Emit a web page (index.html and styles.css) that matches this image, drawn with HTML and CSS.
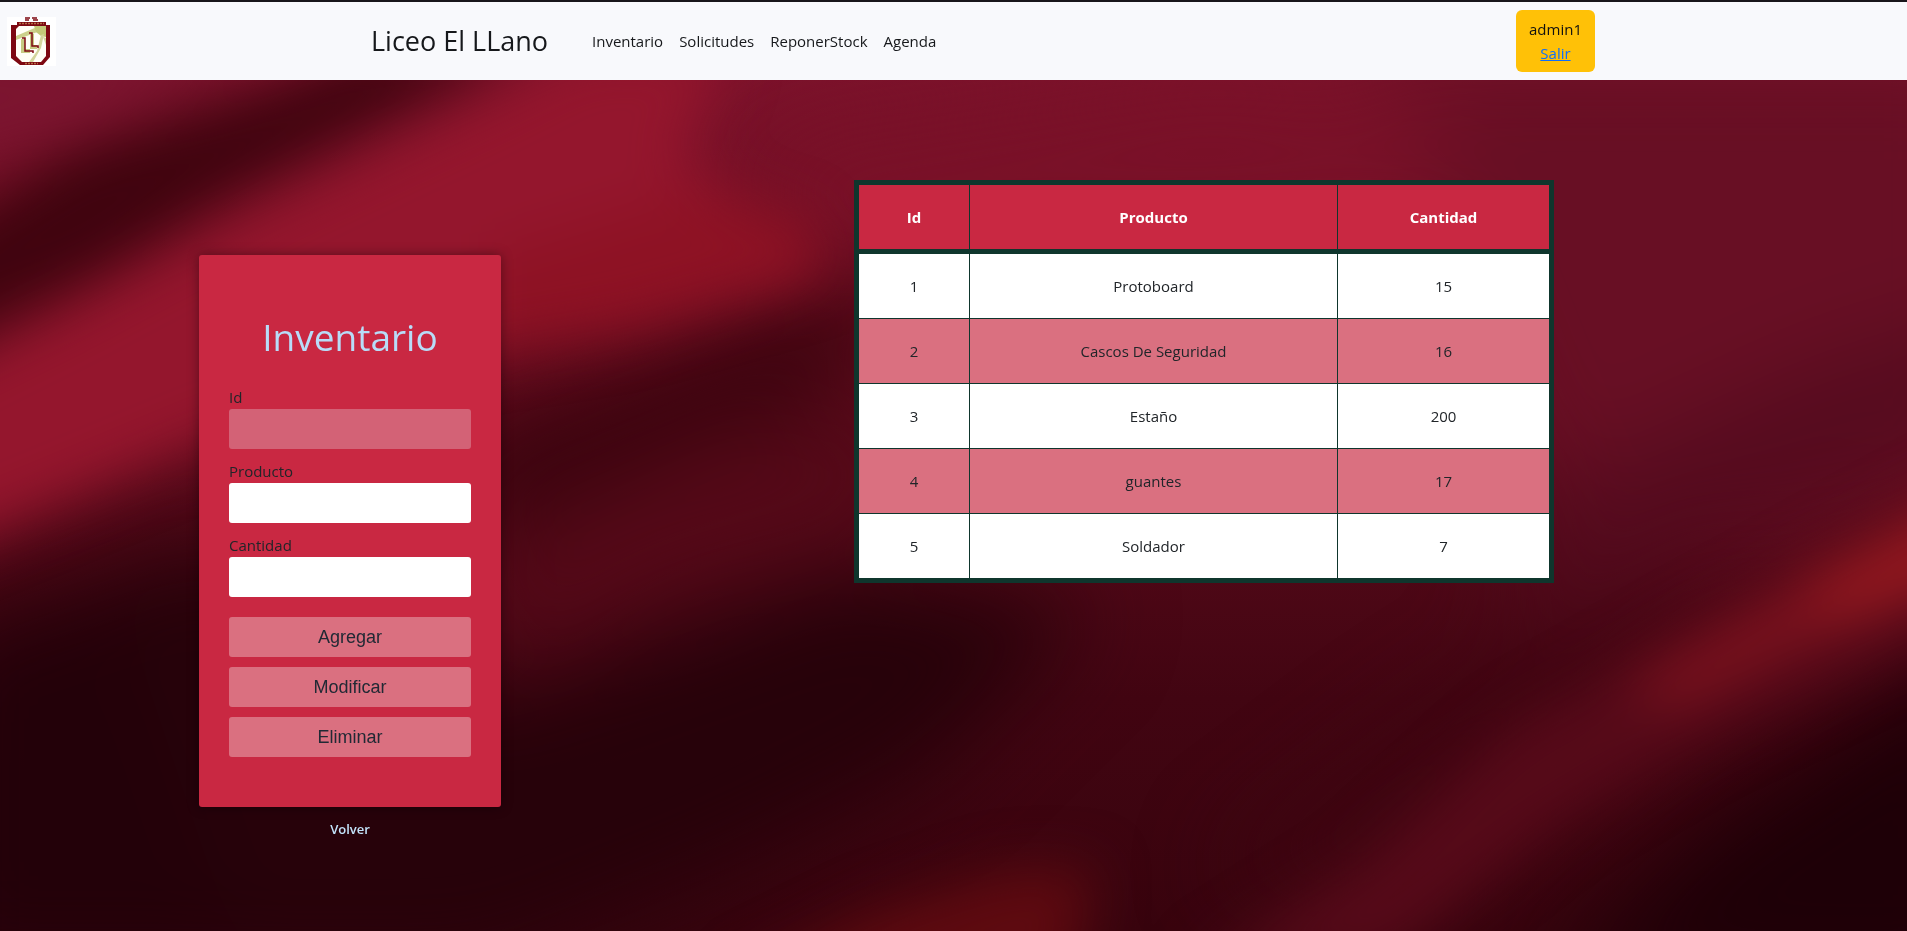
FILE: index.html
```
<!DOCTYPE html>
<html lang="es">
<head>
<meta charset="utf-8">
<title>Liceo El LLano - Inventario</title>
<link rel="stylesheet" href="styles.css">
</head>
<body>
<svg class="backdrop" viewBox="0 0 1568 766" preserveAspectRatio="none" aria-hidden="true">
  <defs>
    <filter id="soft" x="-30%" y="-30%" width="160%" height="160%" color-interpolation-filters="sRGB"><feGaussianBlur stdDeviation="22"/></filter>
    <filter id="softer" x="-40%" y="-40%" width="180%" height="180%" color-interpolation-filters="sRGB"><feGaussianBlur stdDeviation="38"/></filter>
    <linearGradient id="base" x1="0" y1="0" x2="0" y2="1">
      <stop offset="0.08" stop-color="#7c122b"/>
      <stop offset="0.3" stop-color="#6e0e22"/>
      <stop offset="0.5" stop-color="#580a1a"/>
      <stop offset="0.75" stop-color="#420512"/>
      <stop offset="1" stop-color="#38040e"/>
    </linearGradient>
  </defs>
  <rect width="1568" height="766" fill="url(#base)"/>
  <g filter="url(#softer)">
    <path d="M1120 40H1640V400L1440 460L1260 400Z" fill="#680f24"/>
    <path d="M1280 400L1500 300L1640 260V340L1440 440L1240 520Z" fill="#540b1e"/>
    <path d="M360 370L560 290L700 230L760 250L640 350L400 470Z" fill="#37030d"/>
    <path d="M400 440L620 340L760 350L740 430L560 480L400 560Z" fill="#550918"/>
    <path d="M-60 520L180 440L400 580L700 470L900 500L760 640L600 720L400 800H-60Z" fill="#27020a"/>
    <path d="M-60 560L100 500L200 800H-60Z" fill="#230109"/>
    <path d="M1000 720L1160 600L1320 500L1380 480L1280 590L1130 740Z" fill="#3f0511"/>
    <path d="M1260 820L1400 680L1640 520V820Z" fill="#1e0007"/>
    <path d="M620 120L1000 60L1200 90L1160 180L860 190L660 220Z" fill="#7a1128"/>
  </g>
  <g filter="url(#soft)">
    <path d="M-60 310L60 250L200 175L400 80L480 40H600L560 130L660 200L640 230L420 280L180 360L-60 460Z" fill="#94162d"/>
    <path d="M400 210L560 160L660 180L680 225L520 270L400 290Z" fill="#8e1224"/>
    <path d="M-60 200L60 125L230 70L300 40H430L330 90L180 165L80 225L-60 290Z" fill="#40040f"/>
    <path d="M-60 40H190L80 100L-60 140Z" fill="#7c1530"/>
    <path d="M980 800L1120 710L1240 600L1400 510L1640 380V500L1400 610L1280 680L1140 790Z" fill="#560a19"/>
    <path d="M1330 570L1480 480L1640 390V470L1480 530L1380 580Z" fill="#7e121e"/>
    <path d="M1480 480L1640 395V460L1510 510Z" fill="#94181f"/>
    <path d="M600 810L720 750L830 715L900 715L880 810Z" fill="#5e0a10"/>
  </g>
</svg>

<header class="topbar">
  <svg class="crest" viewBox="0 0 49 49" role="img" aria-label="Escudo del liceo">
    <rect width="49" height="49" fill="#fff"/>
    <path d="M10 5H39V8H43V40L36 48H13L4 41V8H10Z" fill="#7d0812"/>
    <path d="M12 9H36L39 12V39L34 45H15L9 39V12Z" fill="#fffef6"/>
    <path d="M9 19L30 10L33 14L9 23Z" fill="#ccd08c"/>
    <path d="M27 9H39V20L34 19L29 15Z" fill="#c3c877"/>
    <path d="M22 45L30 34L34 18L37 17L34 31L26 45ZM36 20L39 21V28Z" fill="#d3d59c"/>
    <path d="M16 22V34H23M25 17V30H30" fill="none" stroke="#c7ca83" stroke-width="4"/>
    <path d="M15 21H18V34H26V36M22 16H25V29H31V31" fill="none" stroke="#7d0812" stroke-width="1.500"/>
    <path d="M18 1H23M25 1H30M18 3H22M26 3H31" stroke="#7d0812" stroke-width="1.500"/>
    <path d="M12 6.500H37M18 46.500H31" stroke="#b46d45" stroke-width="1.500" stroke-dasharray="2 1"/>
  </svg>
  <div class="brand">Liceo El LLano</div>
  <nav class="links">
    <a href="#">Inventario</a>
    <a href="#">Solicitudes</a>
    <a href="#">ReponerStock</a>
    <a href="#">Agenda</a>
  </nav>
  <div class="account">
    <span>admin1</span>
    <a href="#">Salir</a>
  </div>
</header>

<main class="page">
  <section class="side">
    <form class="card">
      <h1>Inventario</h1>
      <label for="id">Id</label>
      <input id="id" type="text" disabled>
      <label for="producto">Producto</label>
      <input id="producto" type="text">
      <label for="cantidad">Cantidad</label>
      <input id="cantidad" type="text">
      <div class="actions">
        <button type="button">Agregar</button>
        <button type="button">Modificar</button>
        <button type="button">Eliminar</button>
      </div>
    </form>
    <a class="back" href="#">Volver</a>
  </section>
  <section class="listing">
    <table>
      <colgroup><col class="col-id"><col class="col-product"><col class="col-amount"></colgroup>
      <thead>
        <tr><th>Id</th><th>Producto</th><th>Cantidad</th></tr>
      </thead>
      <tbody>
        <tr><td>1</td><td>Protoboard</td><td>15</td></tr>
        <tr><td>2</td><td>Cascos De Seguridad</td><td>16</td></tr>
        <tr><td>3</td><td>Estaño</td><td>200</td></tr>
        <tr><td>4</td><td>guantes</td><td>17</td></tr>
        <tr><td>5</td><td>Soldador</td><td>7</td></tr>
      </tbody>
    </table>
  </section>
</main>
</body>
</html>
```
FILE: styles.css
```
* {
  box-sizing: border-box;
}

body {
  margin: 0;
  min-height: 100vh;
  background: #3a0410;
  color: #212529;
  font: 15px/24px "Open Sans", "Noto Sans", sans-serif;
}

.backdrop {
  position: fixed;
  inset: 0;
  z-index: -1;
  width: 100%;
  height: 100%;
}

.topbar {
  display: grid;
  grid-template-columns: 364fr 221fr 924fr 391fr;
  align-items: center;
  height: 80px;
  padding-left: 7px;
  border-top: 2px solid #18161b;
  background: #f8f9fc;
}

.crest {
  width: 49px;
  height: 49px;
}

.brand {
  font-size: 27px;
  line-height: 40px;
  color: #16181b;
  white-space: nowrap;
}

.links {
  display: flex;
  gap: 16px;
}

.links a {
  color: #16181b;
  text-decoration: none;
}

.account {
  display: flex;
  flex-direction: column;
  justify-self: start;
  align-items: center;
  padding: 7px 13px;
  border-radius: 6px;
  background: #ffc107;
  color: #111;
}

.account a {
  color: #0d6efd;
}

.page {
  display: grid;
  grid-template-columns: 700fr 1008fr 199fr;
  align-items: start;
  padding-top: 100px;
}

.side {
  display: flex;
  flex-direction: column;
  align-items: center;
  padding-top: 75px;
}

.card {
  display: flex;
  flex-direction: column;
  width: 302px;
  padding: 58px 30px 50px;
  border-radius: 3px;
  background: #c92842;
  box-shadow: 0 0 12px rgba(0, 0, 0, 0.4);
}

.card h1 {
  margin: 0 0 24px;
  color: #b8dcf8;
  font-size: 37px;
  font-weight: 400;
  line-height: 48px;
  text-align: center;
}

.card input {
  width: 100%;
  height: 40px;
  margin: 0 0 10px;
  padding: 0 10px;
  border: 0;
  border-radius: 3px;
  background: #fff;
  font: inherit;
}

.card input:disabled {
  background: #d36276;
}

.actions {
  display: grid;
  gap: 10px;
  margin-top: 10px;
}

.actions button {
  height: 40px;
  border: 0;
  border-radius: 3px;
  background: #da7080;
  color: #212934;
  font: 18px/24px "Liberation Sans", Arial, sans-serif;
}

.back {
  margin-top: 10px;
  color: #c3e4fb;
  font-size: 13px;
  font-weight: 600;
  text-decoration: none;
}

.listing {
  display: flex;
  justify-content: center;
}

table {
  width: 700px;
  table-layout: fixed;
  border: 5px solid #0f362d;
  border-spacing: 0;
  background: #fff;
  text-align: center;
}

.col-id {
  width: 110px;
}

.col-amount {
  width: 212px;
}

th,
td {
  padding: 20px;
}

th {
  border-bottom: 5px solid #0f362d;
  background: #c92842;
  color: #fff;
  font-weight: 700;
}

th + th,
td + td {
  border-left: 1px solid #0f362d;
}

tbody tr + tr td {
  border-top: 1px solid #0f362d;
}

tbody tr:nth-child(even) {
  background: #da7080;
}
```
